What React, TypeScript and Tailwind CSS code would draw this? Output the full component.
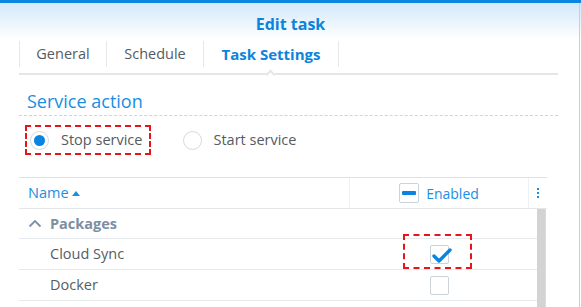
import { useState } from "react"

const font = { fontFamily: '"Open Sans", "Liberation Sans", sans-serif' }

function Tab({ label, width, active, last }: { label: string; width: string; active?: boolean; last?: boolean }) {
    return (
        <div
            className={`${width} h-[26px] flex items-center justify-center border-l border-[#e6e9ec] ${last ? "border-r" : ""} ${
                active ? "font-bold text-[15px] text-[#0a84dc]" : "text-[14.5px] text-[#555b61]"
            }`}
        >
            {label}
        </div>
    )
}

function Radio({ checked }: { checked?: boolean }) {
    return (
        <span className="w-[19px] h-[19px] rounded-full border border-[#d3dae0] bg-white flex items-center justify-center shrink-0">
            {checked && <span className="w-[11px] h-[11px] rounded-full bg-[#0a84e0]" />}
        </span>
    )
}

function Checkbox({ checked }: { checked?: boolean }) {
    return (
        <span className="relative w-[19px] h-[19px] rounded-[2px] border border-[#cbd3da] bg-white block">
            {checked && (
                <svg className="absolute left-[1px] top-[1px]" width="21" height="17" viewBox="0 0 21 17">
                    <path d="M2 9 L7 14 L18 3" fill="none" stroke="#0a84e0" strokeWidth="3.4" strokeLinecap="round" strokeLinejoin="round" />
                </svg>
            )}
        </span>
    )
}

export default function App() {
    const [action, setAction] = useState("stop")

    return (
        <div style={font} className="w-[581px] h-[307px] overflow-hidden bg-white border-t-[3px] border-[#0a86e0] relative">
            <div className="absolute right-[1px] top-0 bottom-0 w-px bg-[#c9ced3]" />

            <div className="h-[37px] bg-gradient-to-b from-[#d3e8f9] to-white pt-[9px] text-center">
                <span className="text-[16px] leading-[20px] font-bold text-[#0a84dc]">Edit task</span>
            </div>

            <div className="pl-[19px] pr-[23px]">
                <div className="relative flex pt-px pb-[6px] border-b-2 border-[#e3e6e9]">
                    <Tab label="General" width="w-[87px]" />
                    <Tab label="Schedule" width="w-[97px]" />
                    <Tab label="Task Settings" width="w-[136px]" active last />
                    <span className="absolute left-[248px] bottom-[-5px] w-[7px] h-[7px] rotate-45 bg-white border-l-2 border-t-2 border-[#e3e6e9]" />
                </div>

                <div className="mt-[15px] pl-[8px] pb-[3px] border-b border-dashed border-[#cfd4d8]">
                    <div className="text-[18px] leading-[22px] text-[#1a8ee2]">Service action</div>
                </div>

                <div className="mt-[9px] flex items-center h-[30px] pl-[6px] text-[14.5px] text-[#555b61]">
                    <label
                        onClick={() => setAction("stop")}
                        className="h-[30px] flex items-center gap-[12px] pl-[3px] pr-[7px] border-2 border-dashed border-[#e8141b] cursor-pointer"
                    >
                        <Radio checked={action === "stop"} />
                        <span>Stop service</span>
                    </label>
                    <label onClick={() => setAction("start")} className="ml-[32px] flex items-center gap-[11px] cursor-pointer">
                        <Radio checked={action === "start"} />
                        <span>Start service</span>
                    </label>
                </div>
            </div>

            <div className="ml-[19px] w-[528px] mt-[22px] border-t border-[#dde2e6]">
                <div className="h-[31px] flex items-center border-b border-[#e3e7ea] text-[14px] text-[#1a8ee2]">
                    <div className="w-[331px] h-full flex items-center pl-[9px] gap-[3px] border-r border-[#eef1f3] text-[14.5px]">
                        Name
                        <svg width="8" height="5" viewBox="0 0 8 5">
                            <path d="M0 5 L4 0 L8 5 Z" fill="#1a8ee2" />
                        </svg>
                    </div>
                    <div className="w-[179px] h-full flex items-center justify-center gap-[7px] border-r border-[#eef1f3]">
                        <span className="w-[20px] h-[20px] rounded-[2px] border border-[#cbd3da] flex items-center justify-center">
                            <span className="w-[14px] h-[4px] rounded-[1px] bg-[#0a84e0]" />
                        </span>
                        Enabled
                    </div>
                    <div className="flex-1 h-full flex flex-col items-center justify-center gap-[2px]">
                        <span className="w-[2px] h-[2px] bg-[#1a8ee2]" />
                        <span className="w-[2px] h-[2px] bg-[#1a8ee2]" />
                        <span className="w-[2px] h-[2px] bg-[#1a8ee2]" />
                    </div>
                </div>

                <div className="flex">
                    <div className="w-[518px] text-[14.5px]">
                        <div className="h-[30px] flex items-center border-b border-[#e6eaed] pl-[9px]">
                            <svg width="14" height="9" viewBox="0 0 14 9" className="mr-[8px]">
                                <path d="M1.5 7.5 L7 2 L12.5 7.5" fill="none" stroke="#7d92a6" strokeWidth="1.8" />
                            </svg>
                            <span className="font-bold text-[#7b8fa3]">Packages</span>
                        </div>
                        <div className="h-[31px] flex items-center border-b border-[#e6eaed]">
                            <span className="w-[331px] pl-[31px] text-[#555d65]">Cloud Sync</span>
                            <div className="w-[179px] flex justify-center">
                                <div className="relative">
                                    <Checkbox checked />
                                    <span className="absolute left-[-27px] top-[-11px] w-[69px] h-[35px] border-2 border-dashed border-[#e8141b]" />
                                </div>
                            </div>
                        </div>
                        <div className="h-[31px] flex items-center border-b border-[#e6eaed]">
                            <span className="w-[331px] pl-[31px] text-[#555d65]">Docker</span>
                            <div className="w-[179px] flex justify-center">
                                <Checkbox />
                            </div>
                        </div>
                    </div>
                    <div className="w-[9px] h-[110px] bg-[#d3d3d3] border-r border-dotted border-[#e2e2e2]" />
                </div>
            </div>
        </div>
    )
}
